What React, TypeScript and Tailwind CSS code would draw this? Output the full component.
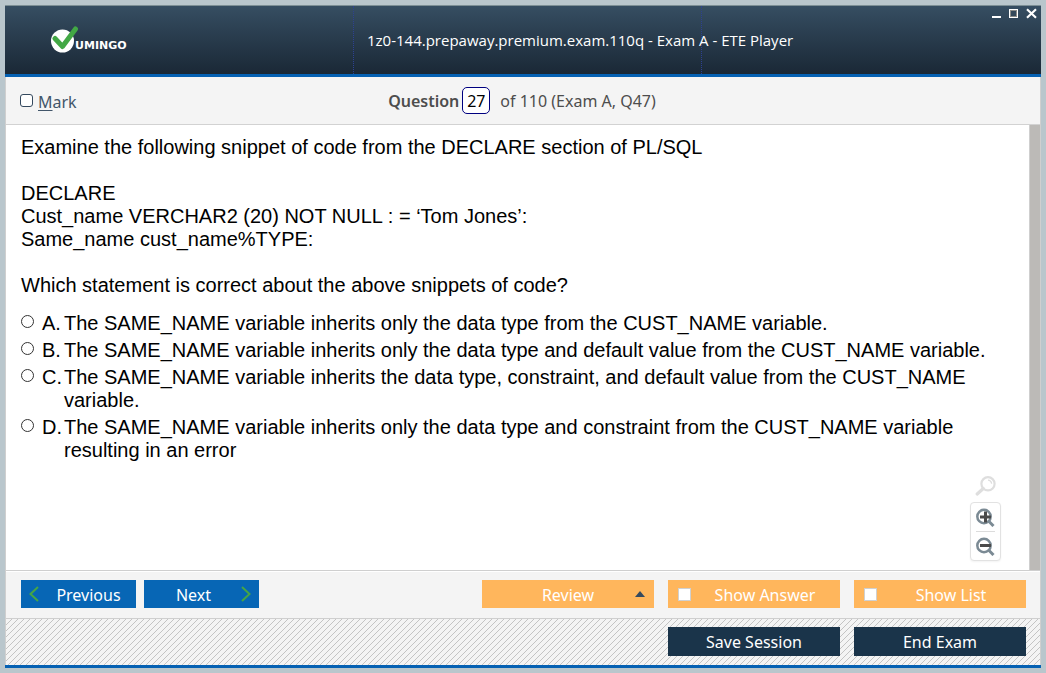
import React from "react";

const answers = [
  { key: "A", text: "The SAME_NAME variable inherits only the data type from the CUST_NAME variable." },
  { key: "B", text: "The SAME_NAME variable inherits only the data type and default value from the CUST_NAME variable." },
  { key: "C", text: "The SAME_NAME variable inherits the data type, constraint, and default value from the CUST_NAME variable." },
  { key: "D", text: "The SAME_NAME variable inherits only the data type and constraint from the CUST_NAME variable resulting in an error" },
];

function Logo() {
  return (
    <div className="flex items-end">
      <svg width="28" height="28" viewBox="0 0 28 28" aria-hidden="true">
        <circle cx="11.5" cy="15" r="11.5" fill="#fff" />
        <path d="M4 12.5 L11.5 20.5 L24.5 3" fill="none" stroke="#42a845" strokeWidth="5" strokeLinecap="round" strokeLinejoin="round" />
      </svg>
      <span className="-ml-1 text-[11px] leading-4 font-bold text-white font-['DejaVu_Sans',sans-serif]">UMINGO</span>
    </div>
  );
}

function WindowControls() {
  return (
    <div className="flex h-3 items-center gap-2 text-white">
      <button type="button" aria-label="Minimize" className="h-3 w-[9px]">
        <svg width="9" height="12" viewBox="0 0 9 12"><rect y="8" width="9" height="2" fill="currentColor" /></svg>
      </button>
      <button type="button" aria-label="Maximize" className="h-3 w-[9px]">
        <svg width="9" height="12" viewBox="0 0 9 12">
          <rect x="0.5" y="1.5" width="8" height="8" fill="#34495a" stroke="#fff" />
          <rect x="1.5" y="2.5" width="6" height="6" fill="none" stroke="#8c8c88" />
        </svg>
      </button>
      <button type="button" aria-label="Close" className="h-3 w-[11px]">
        <svg width="11" height="12" viewBox="0 0 11 12"><path d="M1 1.3 L10 9.7 M10 1.3 L1 9.7" stroke="currentColor" strokeWidth="2.2" /></svg>
      </button>
    </div>
  );
}

function ZoomTools() {
  return (
    <div className="absolute right-[39px] bottom-[9px] flex w-[31px] flex-col items-center">
      <svg width="21" height="20" viewBox="0 0 21 20" fill="none" stroke="#dedede" className="mb-1.5" aria-hidden="true">
        <circle cx="13" cy="7.8" r="6.6" strokeWidth="2.2" />
        <path d="M8.3 12.5 L2.2 18" strokeWidth="3.2" strokeLinecap="round" />
        <path d="M13 4.2 A3.6 3.6 0 0 1 16.6 7.8" strokeWidth="1.3" />
      </svg>
      <div className="flex w-[31px] flex-col items-center rounded border border-[#e2e2e2] bg-white shadow-xs">
        <button type="button" aria-label="Zoom in" className="pt-[5px] pb-1">
          <svg width="19" height="19" viewBox="0 0 19 19" fill="none" className="block">
            <circle cx="8" cy="8.5" r="6.7" stroke="#7b8a94" strokeWidth="2.5" />
            <path d="M12.8 13.3 L17.5 18" stroke="#7b8a94" strokeWidth="3" />
            <path d="M9.5 3.5 V14.5 M4 9 H15" stroke="#4a4a4a" strokeWidth="3" />
          </svg>
        </button>
        <div className="h-px w-[19px] bg-[#dcdcdc]" />
        <button type="button" aria-label="Zoom out" className="pt-[5px] pb-1">
          <svg width="19" height="19" viewBox="0 0 19 19" fill="none" className="block">
            <circle cx="8" cy="8.5" r="6.7" stroke="#7b8a94" strokeWidth="2.5" />
            <path d="M12.8 13.3 L17.5 18" stroke="#7b8a94" strokeWidth="3" />
            <path d="M4 8.5 H15" stroke="#4a4a4a" strokeWidth="3" />
          </svg>
        </button>
      </div>
    </div>
  );
}

const navButton = "relative flex h-7 w-[115px] items-center justify-center bg-[#0766b5] pt-0.5 text-white";
const orangeButton = "relative flex h-7 w-[172px] items-center justify-center bg-[#ffb65c] pt-0.5 text-white";
const darkButton = "flex h-[29px] w-[172px] items-center justify-center bg-[#1a344a] text-white";

function ToggleButton({ label }: { label: string }) {
  return (
    <label className={orangeButton + " pl-[22px]"}>
      <input type="checkbox" className="absolute top-2 left-2.5 size-[13px] appearance-none border border-[#d0d0d0] bg-white checked:bg-[#1a344a]" />
      {label}
    </label>
  );
}

export default function App() {
  return (
    <div className="flex min-h-screen flex-col bg-[#b9c6cc] p-[5px] font-['Noto_Sans',sans-serif] text-base">
      <header className="flex h-[72px] items-stretch border-t border-b-3 border-t-[#7d8f95] border-b-[#0561b3] bg-linear-to-b from-[#364e62] to-[#1a2836]">
        <div className="flex w-[348px] shrink-0 items-start pt-5 pl-[46px]">
          <Logo />
        </div>
        <div className="flex w-[349px] shrink-0 items-center border-x border-dotted border-[#2d4192] pl-[13px]">
          <h1 className="text-[15px] whitespace-nowrap text-white font-['Open_Sans',sans-serif] font-medium">
            1z0-144.prepaway.premium.exam.110q - Exam A - ETE Player
          </h1>
        </div>
        <div className="flex flex-1 items-start justify-end pt-[2px] pr-1">
          <WindowControls />
        </div>
      </header>

      <div className="flex flex-1 flex-col border-x border-[#cfcfcf] bg-[#f4f4f4]">
        <div className="grid h-12 grid-cols-[1fr_auto_1fr] items-center border-b border-[#d2d2d2] pr-4 pl-3.5 text-[#4d4d4d]">
          <label className="flex items-center gap-[5px] text-[#42566a]">
            <input type="checkbox" className="size-[13px] appearance-none rounded-[3px] border border-[#34495e] bg-white checked:bg-[#34495e]" />
            <span className="pt-0.5"><u className="underline-offset-2">M</u>ark</span>
          </label>
          <div className="flex items-center">
            <label htmlFor="question" className="font-semibold">Question</label>
            <input id="question" type="text" defaultValue="27" className="mr-2.5 ml-[3px] h-[27px] w-7 rounded-[5px] border border-[#000080] bg-white text-center text-black" />
            <span>of 110 (Exam A, Q47)</span>
          </div>
        </div>

        <main className="relative flex flex-1 border-b border-[#cfcfcf] bg-white">
          <div className="flex-1 px-[15px] pt-[11px] text-[20px] leading-[23px] text-black font-['Liberation_Sans',Arial,sans-serif]">
            <p>Examine the following snippet of code from the DECLARE section of PL/SQL</p>
            <p className="mt-[23px]">
              DECLARE<br />
              Cust_name VERCHAR2 (20) NOT NULL : = ‘Tom Jones’:<br />
              Same_name cust_name%TYPE:
            </p>
            <p className="mt-[23px]">Which statement is correct about the above snippets of code?</p>
            <div className="mt-[15px] flex flex-col gap-1" role="radiogroup">
              {answers.map((a) => (
                <label key={a.key} className="flex items-start">
                  <input type="radio" name="answer" className="mt-[3px] mr-2 size-[13px] shrink-0 appearance-none rounded-full border border-[#333] bg-white checked:border-4" />
                  <span className="w-[22px] shrink-0 whitespace-nowrap">{a.key}.</span>
                  <span>{a.text}</span>
                </label>
              ))}
            </div>
          </div>
          <div className="w-[11px] border-l border-[#cfcfcf] bg-[#bcbab7]" />
          <ZoomTools />
        </main>

        <div className="flex h-12 items-start justify-between border-t border-b border-t-white border-b-[#cfcfcf] pt-2 pr-3.5 pl-[15px]">
          <div className="flex gap-2">
            <button type="button" className={navButton + " pl-5"}>
              <svg width="10" height="16" viewBox="0 0 10 16" className="absolute top-1.5 left-2" fill="none" stroke="#46a546" strokeWidth="2"><path d="M9 1 L1.5 8 L9 15" /></svg>
              Previous
            </button>
            <button type="button" className={navButton + " pr-4"}>
              Next
              <svg width="10" height="16" viewBox="0 0 10 16" className="absolute top-1.5 right-2" fill="none" stroke="#46a546" strokeWidth="2"><path d="M1 1 L8.5 8 L1 15" /></svg>
            </button>
          </div>
          <div className="flex gap-3.5">
            <button type="button" className={orangeButton}>
              Review
              <svg width="10" height="6" viewBox="0 0 10 6" className="absolute top-[11px] right-[9px]"><path d="M5 0 L10 6 H0 Z" fill="#34495e" /></svg>
            </button>
            <ToggleButton label="Show Answer" />
            <ToggleButton label="Show List" />
          </div>
        </div>

        <div className="flex h-[46px] items-start justify-end gap-3.5 bg-[linear-gradient(135deg,#f4f4f4_44%,#c4c4c4_44%,#c4c4c4_56%,#f4f4f4_56%)] bg-size-[6px_6px] pt-2 pr-3.5">
          <button type="button" className={darkButton}>Save Session</button>
          <button type="button" className={darkButton}>End Exam</button>
        </div>
      </div>
      <div className="h-[3px] bg-[#0561b3]" />
    </div>
  );
}
